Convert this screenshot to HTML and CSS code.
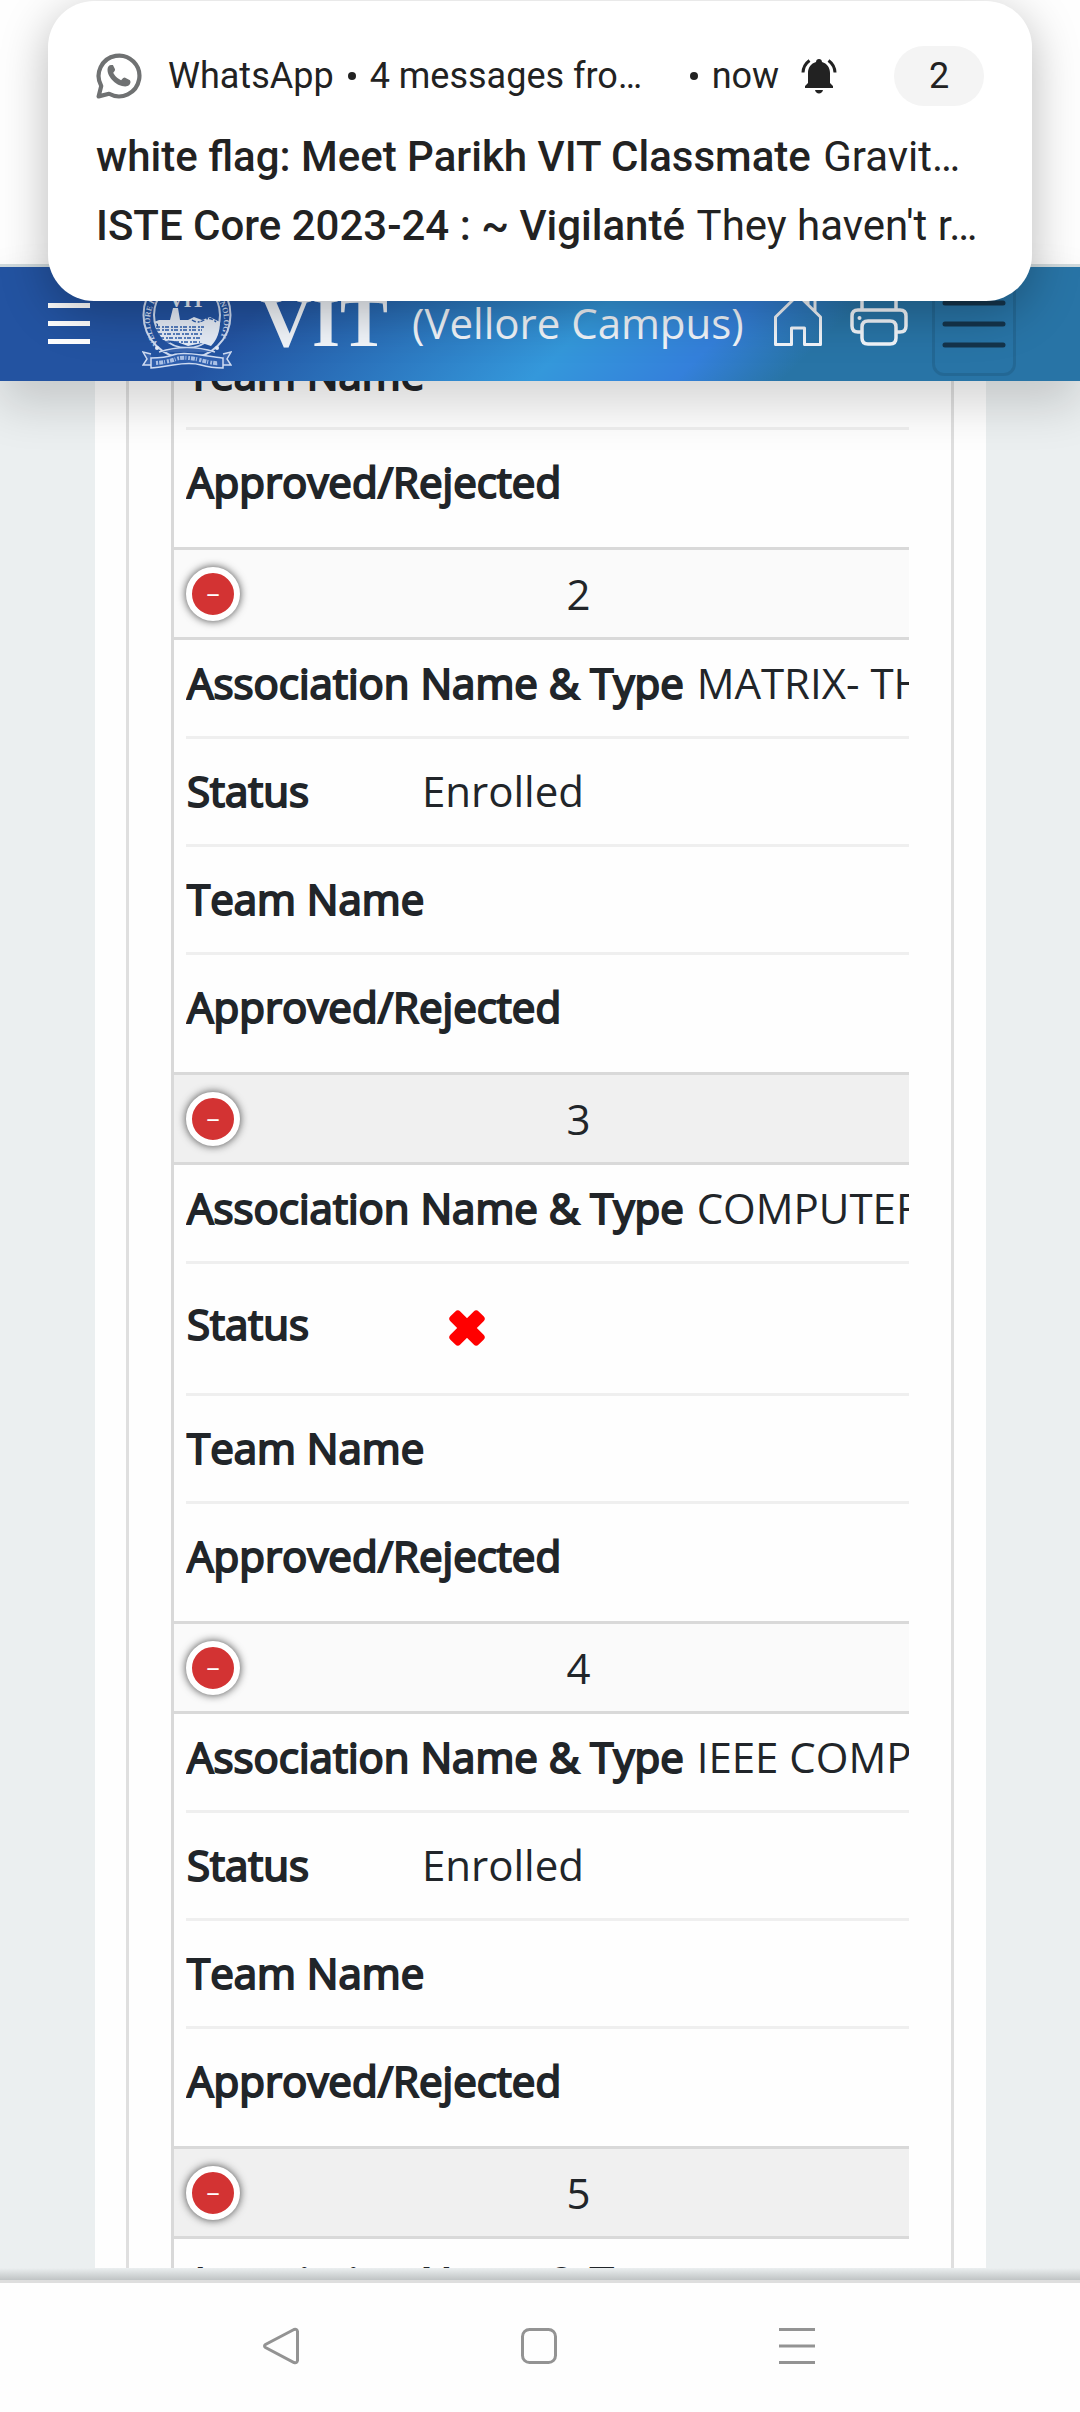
FILE: index.html
```html
<!DOCTYPE html>
<html lang="en">
<head>
<meta charset="utf-8">
<meta name="viewport" content="width=device-width, initial-scale=1">
<title>VIT (Vellore Campus)</title>
<link rel="stylesheet" href="styles.css">
</head>
<body>
<section class="notice" aria-label="Notification">
  <div class="notice-head">
    <svg class="notice-app" viewBox="0 0 44 44" aria-hidden="true">
      <path d="M2.500 41.500 5 31.500A19.500 19.500 0 1 1 12.500 39Z" fill="none" stroke="#6f7172" stroke-width="4" stroke-linejoin="round"/>
      <path d="M14.500 11.500c-2 0-3.500 2-3.500 4.500 0 7.500 9 16 17 16 3 0 5-2 5-4.500l-.5-1.500-5-2.500-1.500.5-2 2c-3-1-6.500-4.500-7.500-7l1.500-2 .2-1.500-2-4z" fill="#6f7172"/>
    </svg>
    <span class="notice-source">WhatsApp</span>
    <span class="dot"></span>
    <span class="notice-summary">4 messages fro…</span>
    <span class="dot"></span>
    <span>now</span>
    <svg class="notice-bell" viewBox="0 0 36 36" aria-hidden="true">
      <path d="M18 1c1.700 0 3 1.200 3 3 5 1.500 8 5.500 8 11v10l3 3v2H4v-2l3-3V15C7 9.500 10 5.500 15 4c0-1.800 1.300-3 3-3zM14 32h8c-.5 2.200-2 3.500-4 3.500S14.500 34.200 14 32z" fill="#222"/>
      <path d="M8.500 2.500C4.500 5.500 2.200 9.500 2 14.500M27.500 2.500C31.500 5.500 33.800 9.500 34 14.500" fill="none" stroke="#222" stroke-width="3"/>
    </svg>
    <span class="notice-count">2</span>
  </div>
  <p class="notice-line"><strong>white flag: Meet Parikh VIT Classmate</strong> Gravit…</p>
  <p class="notice-line"><strong>ISTE Core 2023-24 : ~ Vigilanté</strong> They haven't r…</p>
</section>

<header class="site-head">
  <button class="menu" type="button" aria-label="Menu">
    <svg viewBox="0 0 42 42" aria-hidden="true"><path d="M0 2.500h42M0 20.500h42M0 38.500h42" stroke="#fff" stroke-width="5"/></svg>
  </button>
  <svg class="crest" viewBox="0 0 90 100" aria-hidden="true">
    <defs><path id="ring" d="M18 76A37 37 0 1 1 72 76"/></defs>
    <circle cx="45" cy="45" r="43.500" fill="none" stroke="#cfdcf2" stroke-width="2"/>
    <circle cx="45" cy="45" r="33" fill="none" stroke="#cfdcf2" stroke-width="2"/>
    <text class="crest-ring"><textPath href="#ring" startOffset="3">VELLORE INSTITUTE OF TECHNOLOGY</textPath></text>
    <text class="crest-name" x="45" y="37" text-anchor="middle">VIT</text>
    <path d="M12 52l5-2h11l3-12h5l2 12h8l6-3 8 3 8-3 10 5c0 9-3 18-9 24l-9-3-14 3-14-5-11-1c-3-4-5-9-5-16z" fill="#e6edf8"/>
    <path d="M14 57h48M14 60h46M16 64h44M18 68h42M24 72h34M50 50q6 4 12 0t12 2" fill="none" stroke="#2a5bab" stroke-width="1.500" stroke-dasharray="4 2 2 1"/>
    <circle cx="15" cy="78" r="2" fill="#e6edf8"/><circle cx="75" cy="78" r="2" fill="#e6edf8"/>
    <path d="M9 84l-8-2 4 7-4 6 9 0M81 84l8-2-4 7 4 6-9 0M17 82q28-9 56 0" fill="#3a66b0" stroke="#cfdcf2" stroke-width="1.500"/>
    <path d="M9 98V88q14 0 22-3t28 0 22 3v10q-12 0-22-3t-28 0-22 3z" fill="#2f5fae" stroke="#cfdcf2" stroke-width="1.500"/>
    <path d="M14 93q12-1 20-4t24 1 18 3" fill="none" stroke="#a9c0e6" stroke-width="4" stroke-dasharray="2 1 4 1 1 2"/>
  </svg>
  <span class="brand">VIT</span>
  <span class="campus">(Vellore Campus)</span>
  <a class="tool home" href="#home" aria-label="Home">
    <svg viewBox="0 0 48 56" aria-hidden="true"><path d="M1.500 27 24 5l22.500 22v27.500H30.500V38h-13v16.500h-16zM34 14V5h7v16" fill="none" stroke="#f2f6fb" stroke-width="3" stroke-linejoin="round"/></svg>
  </a>
  <button class="tool print" type="button" aria-label="Print">
    <svg viewBox="0 0 58 56" aria-hidden="true"><path d="M12 20V8q0-6 6-6h22q6 0 6 6v12M12 42H8q-6 0-6-6V26q0-6 6-6h42q6 0 6 6v10q0 6-6 6h-4M12 37q0-6 6-6h22q6 0 6 6v11q0 6-6 6H18q-6 0-6-6z" fill="none" stroke="#f2f6fb" stroke-width="3.500"/><circle cx="9.500" cy="28" r="2" fill="#f2f6fb"/></svg>
  </button>
  <button class="toggler" type="button" aria-label="Toggle navigation">
    <svg viewBox="0 0 64 48" aria-hidden="true"><path d="M3 3h58M3 24h58M3 45h58" stroke="#14344b" stroke-width="5" stroke-linecap="round"/></svg>
  </button>
</header>

<main class="page">
  <div class="sheet">
    <div class="panel">
      <table class="records">
        <tbody>
          <tr><td class="detail"><ul>
            <li><span class="label">Team Name</span></li>
            <li><span class="label">Approved/Rejected</span></li>
          </ul></td></tr>

          <tr class="even"><td><div class="entry"><button class="collapse" type="button" aria-label="Collapse row 2">–</button><span>2</span></div></td></tr>
          <tr><td class="detail"><ul>
            <li><span class="label">Association Name &amp; Type</span> MATRIX- TH</li>
            <li><span class="label">Status</span> Enrolled</li>
            <li><span class="label">Team Name</span></li>
            <li><span class="label">Approved/Rejected</span></li>
          </ul></td></tr>

          <tr class="odd"><td><div class="entry"><button class="collapse" type="button" aria-label="Collapse row 3">–</button><span>3</span></div></td></tr>
          <tr><td class="detail"><ul>
            <li><span class="label">Association Name &amp; Type</span> COMPUTER</li>
            <li class="refused"><span class="label">Status</span>
              <svg class="cross" viewBox="0 0 36 36" role="img" aria-label="Not enrolled"><g fill="#f00"><rect x="-2" y="11" width="40" height="14" rx="3.500" transform="rotate(45 18 18)"/><rect x="-2" y="11" width="40" height="14" rx="3.500" transform="rotate(-45 18 18)"/></g></svg>
            </li>
            <li><span class="label">Team Name</span></li>
            <li><span class="label">Approved/Rejected</span></li>
          </ul></td></tr>

          <tr class="even"><td><div class="entry"><button class="collapse" type="button" aria-label="Collapse row 4">–</button><span>4</span></div></td></tr>
          <tr><td class="detail"><ul>
            <li><span class="label">Association Name &amp; Type</span> IEEE COMPUTER</li>
            <li><span class="label">Status</span> Enrolled</li>
            <li><span class="label">Team Name</span></li>
            <li><span class="label">Approved/Rejected</span></li>
          </ul></td></tr>

          <tr class="odd"><td><div class="entry"><button class="collapse" type="button" aria-label="Collapse row 5">–</button><span>5</span></div></td></tr>
          <tr><td class="detail"><ul>
            <li><span class="label">Association Name &amp; Type</span></li>
          </ul></td></tr>
        </tbody>
      </table>
    </div>
  </div>
</main>

<nav class="system-bar" aria-label="System">
  <button type="button" aria-label="Back"><svg viewBox="0 0 38 38" aria-hidden="true"><path d="M32 2.500 3.500 17.500q-2 1.500 0 3L32 35.500q3 1 3.500-2v-29q-.5-3-3.500-2z" fill="none" stroke="#939393" stroke-width="3"/></svg></button>
  <button type="button" aria-label="Home screen"><svg viewBox="0 0 38 38" aria-hidden="true"><rect x="2.500" y="2.500" width="33" height="33" rx="7" fill="none" stroke="#939393" stroke-width="3"/></svg></button>
  <button type="button" aria-label="Recent apps"><svg viewBox="0 0 38 38" aria-hidden="true"><path d="M1 2.500h36M1 19h36M1 35.500h36" stroke="#939393" stroke-width="3"/></svg></button>
</nav>
</body>
</html>
```
FILE: styles.css
```css
* { box-sizing: border-box; }

body {
  margin: 0;
  height: 100vh;
  display: flex;
  flex-direction: column;
  overflow: hidden;
  padding-top: 264px;
  background: #fefefe;
  color: #212529;
  font: 400 42px/63px "Open Sans", "Noto Sans", sans-serif;
}

button {
  margin: 0;
  padding: 0;
  border: 0;
  background: none;
  color: inherit;
  font: inherit;
}

svg { display: block; }

/* Notification shade */
.notice {
  position: absolute;
  z-index: 2;
  top: 1px;
  left: 48px;
  right: 48px;
  height: 300px;
  padding: 45px 48px 0;
  border-radius: 46px;
  background: #fff;
  box-shadow: 0 12px 48px rgba(0, 0, 0, 0.28);
  color: #222;
  font: 400 42px/69px Roboto, sans-serif;
}

.notice-head {
  display: flex;
  align-items: center;
  height: 60px;
  margin-bottom: 16px;
  font-size: 36px;
}

.notice-app { width: 46px; height: 46px; margin-right: 26px; }

.dot {
  flex: none;
  width: 8px;
  height: 8px;
  margin: 0 14px;
  border-radius: 50%;
  background: #222;
}

.notice-summary {
  width: 306px;
  overflow: hidden;
  white-space: nowrap;
}

.notice-bell { width: 36px; height: 36px; margin-left: 22px; }

.notice-count {
  width: 90px;
  margin-left: auto;
  border-radius: 30px;
  background: #f4f4f4;
  line-height: 60px;
  text-align: center;
}

.notice-line { margin: 0; white-space: nowrap; }
.notice-line strong { margin-right: 2px; font-weight: 500; }

/* Site header */
.site-head {
  flex: none;
  position: relative;
  z-index: 1;
  display: flex;
  align-items: center;
  height: 117px;
  padding: 0 64px 0 48px;
  border-top: 3px solid #cfd9dc;
  background: linear-gradient(135deg, #2353a1 25%, #3498db 54%, #3480db 66%, #2874a6 75%);
  box-shadow: 0 24px 48px rgba(0, 0, 0, 0.16);
  color: #f2f6fb;
}

.menu svg { width: 42px; height: 42px; }

.crest { width: 90px; height: 100px; margin: 0 28px 8px 52px; }
.crest-ring { fill: #cfdcf2; font: 700 8px "Liberation Serif", serif; }
.crest-name { fill: #e6edf8; font: 700 20px "Liberation Serif", serif; }

.brand {
  margin: 0 24px 4px 0;
  font: 700 72px/80px "Liberation Serif", serif;
}

.campus { margin-bottom: 4px; white-space: nowrap; }

.tool { margin-bottom: 12px; }
.home { margin-left: auto; }
.home svg { width: 48px; height: 56px; }
.print { margin-left: 28px; margin-right: 24px; }
.print svg { width: 58px; height: 56px; }

.toggler {
  display: grid;
  place-items: center;
  width: 84px;
  height: 104px;
  border: 3px solid rgba(0, 0, 0, 0.1);
  border-radius: 12px;
}

.toggler svg { width: 64px; height: 48px; }

/* Scrolled page body */
.page {
  flex: 1;
  min-height: 0;
  overflow: hidden;
  padding: 0 94px 0 95px;
  background: #ebeff0;
}

.sheet { height: 100%; padding: 0 32px 0 31px; background: #fefefe; }

.panel {
  height: 100%;
  padding: 0 42px;
  overflow: hidden;
  border: solid #dfdfdf;
  border-width: 0 3px;
}

.records {
  width: 100%;
  margin-top: -59px;
  table-layout: fixed;
  border-collapse: separate;
  border-spacing: 0;
  border-left: 3px solid #d9d9d9;
}

.records td { padding: 12px 16px 12px 12px; border-bottom: 3px solid #d9d9d9; }
.records td.detail { padding: 0 0 0 12px; }
.even { background: #fafafa; }
.odd { background: #f0f0f0; }

.entry { display: flex; align-items: center; gap: 24px; }
.entry span { flex: 1; text-align: center; }

.collapse {
  width: 54px;
  height: 54px;
  padding-top: 2px;
  border: 6px solid #fff;
  border-radius: 50%;
  background: #d33333;
  box-shadow: 0 0 9px #444;
  color: #fff;
  font: 400 26px/40px "Liberation Mono", monospace;
}

.detail ul { margin: 0; padding: 0; overflow: hidden; list-style: none; }

.detail li {
  padding: 20px 0 22px;
  border-bottom: 3px solid #efefef;
  white-space: nowrap;
}

tr + tr .detail li:first-child,
tr + tr .detail li:first-child { padding-top: 11px; }
.detail li:last-child { padding-bottom: 34px; border-bottom: 0; }

.label {
  display: inline-block;
  min-width: 225px;
  padding: 0 2px 0 1px;
  -webkit-text-stroke: 2px currentColor;
}

.detail .refused { display: flex; align-items: center; height: 132px; }
.refused .label { margin-bottom: 8px; }
.cross { width: 36px; height: 36px; margin-left: 38px; }

/* System navigation */
.system-bar {
  flex: none;
  display: flex;
  justify-content: center;
  align-items: center;
  gap: 220px;
  height: 144px;
  padding: 12px 2px 0 0;
  background: linear-gradient(#ebeff0, #c0c4c5 12px, #dedede 12px, #dedede 15px, #fefefe 15px);
}

.system-bar svg { width: 38px; height: 38px; }
```
